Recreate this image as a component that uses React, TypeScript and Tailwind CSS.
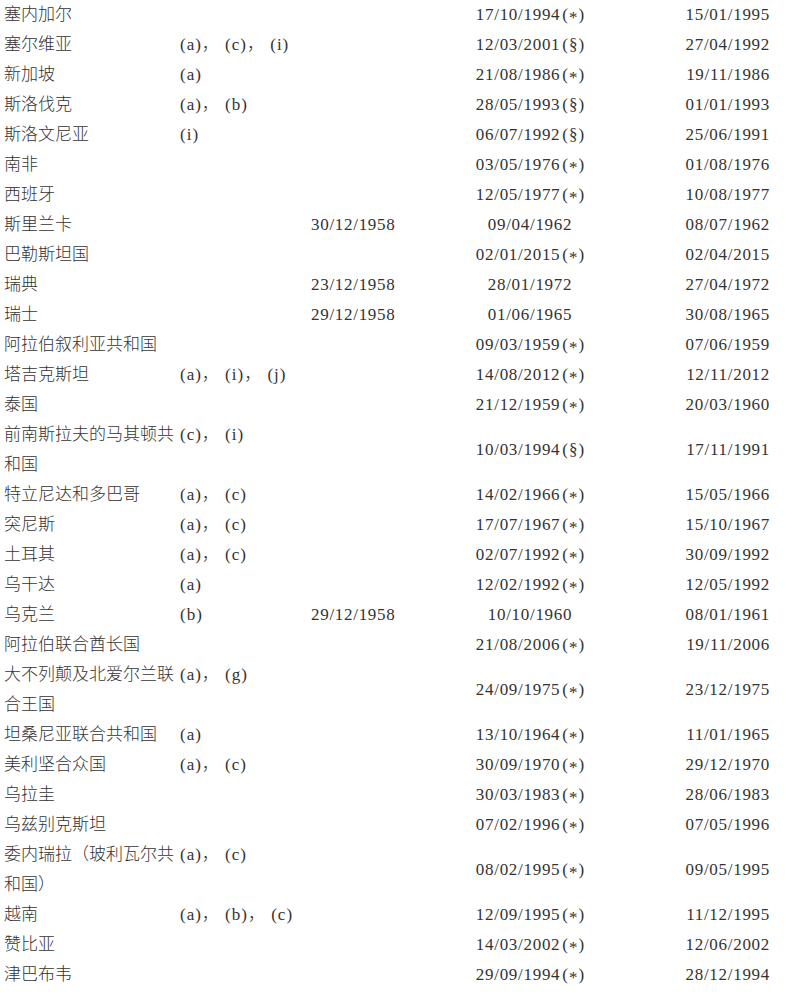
type Row = {
  name: string;
  notes?: string;
  signed?: string;
  ratified: string;
  force: string;
};

const rows: Row[] = [
  { name: "塞内加尔", ratified: "17/10/1994(*)", force: "15/01/1995" },
  { name: "塞尔维亚", notes: "(a)， (c)， (i)", ratified: "12/03/2001(§)", force: "27/04/1992" },
  { name: "新加坡", notes: "(a)", ratified: "21/08/1986(*)", force: "19/11/1986" },
  { name: "斯洛伐克", notes: "(a)， (b)", ratified: "28/05/1993(§)", force: "01/01/1993" },
  { name: "斯洛文尼亚", notes: "(i)", ratified: "06/07/1992(§)", force: "25/06/1991" },
  { name: "南非", ratified: "03/05/1976(*)", force: "01/08/1976" },
  { name: "西班牙", ratified: "12/05/1977(*)", force: "10/08/1977" },
  { name: "斯里兰卡", signed: "30/12/1958", ratified: "09/04/1962", force: "08/07/1962" },
  { name: "巴勒斯坦国", ratified: "02/01/2015(*)", force: "02/04/2015" },
  { name: "瑞典", signed: "23/12/1958", ratified: "28/01/1972", force: "27/04/1972" },
  { name: "瑞士", signed: "29/12/1958", ratified: "01/06/1965", force: "30/08/1965" },
  { name: "阿拉伯叙利亚共和国", ratified: "09/03/1959(*)", force: "07/06/1959" },
  { name: "塔吉克斯坦", notes: "(a)， (i)， (j)", ratified: "14/08/2012(*)", force: "12/11/2012" },
  { name: "泰国", ratified: "21/12/1959(*)", force: "20/03/1960" },
  { name: "前南斯拉夫的马其顿共和国", notes: "(c)， (i)", ratified: "10/03/1994(§)", force: "17/11/1991" },
  { name: "特立尼达和多巴哥", notes: "(a)， (c)", ratified: "14/02/1966(*)", force: "15/05/1966" },
  { name: "突尼斯", notes: "(a)， (c)", ratified: "17/07/1967(*)", force: "15/10/1967" },
  { name: "土耳其", notes: "(a)， (c)", ratified: "02/07/1992(*)", force: "30/09/1992" },
  { name: "乌干达", notes: "(a)", ratified: "12/02/1992(*)", force: "12/05/1992" },
  { name: "乌克兰", notes: "(b)", signed: "29/12/1958", ratified: "10/10/1960", force: "08/01/1961" },
  { name: "阿拉伯联合酋长国", ratified: "21/08/2006(*)", force: "19/11/2006" },
  { name: "大不列颠及北爱尔兰联合王国", notes: "(a)， (g)", ratified: "24/09/1975(*)", force: "23/12/1975" },
  { name: "坦桑尼亚联合共和国", notes: "(a)", ratified: "13/10/1964(*)", force: "11/01/1965" },
  { name: "美利坚合众国", notes: "(a)， (c)", ratified: "30/09/1970(*)", force: "29/12/1970" },
  { name: "乌拉圭", ratified: "30/03/1983(*)", force: "28/06/1983" },
  { name: "乌兹别克斯坦", ratified: "07/02/1996(*)", force: "07/05/1996" },
  { name: "委内瑞拉（玻利瓦尔共和国）", notes: "(a)， (c)", ratified: "08/02/1995(*)", force: "09/05/1995" },
  { name: "越南", notes: "(a)， (b)， (c)", ratified: "12/09/1995(*)", force: "11/12/1995" },
  { name: "赞比亚", ratified: "14/03/2002(*)", force: "12/06/2002" },
  { name: "津巴布韦", ratified: "29/09/1994(*)", force: "28/12/1994" },
];

// split "(*)" / "(§)" off so the date digits get their own spacing
function DateCell({ value }: { value: string }) {
  const i = value.indexOf("(");
  const date = i >= 0 ? value.slice(0, i) : value;
  const mark = i >= 0 ? value.slice(i + 1, -1) : "";
  return (
    <span>
      <span className="tracking-[0.7px]">{date}</span>
      {mark && (
        <span className="ml-[2px]">
          (
          {mark === "*" ? (
            <span className="relative top-[3px] mx-[1px]">*</span>
          ) : (
            <span className="mx-[1px]">{mark}</span>
          )}
          )
        </span>
      )}
    </span>
  );
}

export default function App() {
  return (
    <div
      className="w-[800px] bg-white pl-1 text-[17px] font-light leading-[30px] text-[#333333]"
      style={{ fontFamily: '"Liberation Serif", "Noto Sans CJK SC", serif' }}
    >
      <div className="grid grid-cols-[176px_131px_120px_198px_141px] items-center">
        {rows.map((r) => (
          <div key={r.name} className="contents">
            <div className="break-all">{r.name}</div>
            <div className="self-start whitespace-nowrap tracking-[1px]">{r.notes ?? ""}</div>
            <div className="whitespace-nowrap">{r.signed ? <DateCell value={r.signed} /> : ""}</div>
            <div className="whitespace-nowrap text-center">
              <DateCell value={r.ratified} />
            </div>
            <div className="whitespace-nowrap text-right">
              <DateCell value={r.force} />
            </div>
          </div>
        ))}
      </div>
    </div>
  );
}
